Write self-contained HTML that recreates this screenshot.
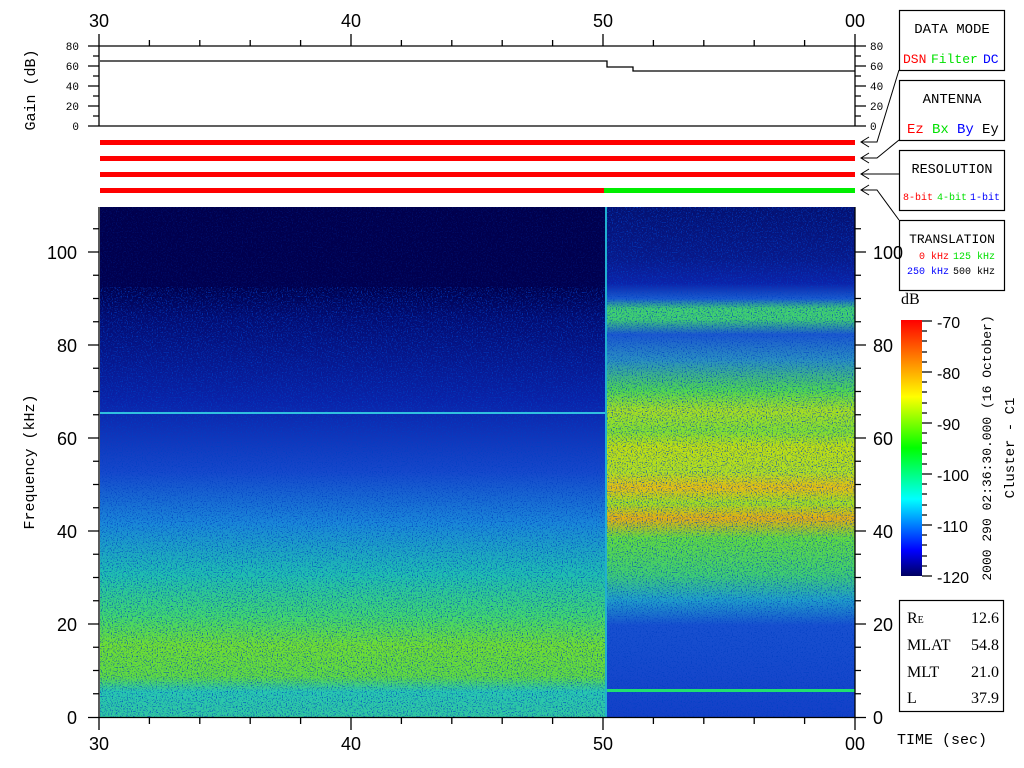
<!DOCTYPE html>
<html><head><meta charset="utf-8"><style>
html,body{margin:0;padding:0;background:#fff;width:1024px;height:768px;overflow:hidden}
svg{display:block}
.t{font-family:"Liberation Sans",sans-serif;font-size:18px;fill:#000}
.m{font-family:"Liberation Mono",monospace;font-size:11px;fill:#000}
.b{font-family:"Liberation Mono",monospace;font-size:14px;fill:#000}
.s{font-family:"Liberation Serif",serif;font-size:16px;fill:#000}
.r{fill:#ff0000 !important}.g{fill:#00e000 !important}.u{fill:#0000ff !important}
</style></head><body>
<svg width="1024" height="768" viewBox="0 0 1024 768" xmlns="http://www.w3.org/2000/svg">
<defs>
<linearGradient id="gl" x1="0" y1="207" x2="0" y2="717" gradientUnits="userSpaceOnUse">
<stop offset="0" stop-color="#000048"/>
<stop offset="0.16" stop-color="#00004e"/>
<stop offset="0.22" stop-color="#030c72"/>
<stop offset="0.38" stop-color="#0a22a8"/>
<stop offset="0.52" stop-color="#1648cc"/>
<stop offset="0.62" stop-color="#1a88d8"/>
<stop offset="0.72" stop-color="#20c0b0"/>
<stop offset="0.8" stop-color="#40d870"/>
<stop offset="0.86" stop-color="#70e030"/>
<stop offset="0.92" stop-color="#60dc40"/>
<stop offset="0.95" stop-color="#28c8b0"/>
<stop offset="1" stop-color="#30c8a0"/>
</linearGradient>
<linearGradient id="gr" x1="0" y1="207" x2="0" y2="717" gradientUnits="userSpaceOnUse">
<stop offset="0" stop-color="#041070"/>
<stop offset="0.1" stop-color="#081888"/>
<stop offset="0.15" stop-color="#0c22a8"/>
<stop offset="0.18" stop-color="#1a5cd0"/>
<stop offset="0.2" stop-color="#40d070"/>
<stop offset="0.22" stop-color="#40d070"/>
<stop offset="0.25" stop-color="#1c58d0"/>
<stop offset="0.3" stop-color="#2a90c0"/>
<stop offset="0.36" stop-color="#50d850"/>
<stop offset="0.4" stop-color="#a8e020"/>
<stop offset="0.44" stop-color="#80e030"/>
<stop offset="0.47" stop-color="#c0e010"/>
<stop offset="0.52" stop-color="#b0e020"/>
<stop offset="0.55" stop-color="#e8c010"/>
<stop offset="0.58" stop-color="#a0e020"/>
<stop offset="0.61" stop-color="#e8b010"/>
<stop offset="0.65" stop-color="#60dc40"/>
<stop offset="0.72" stop-color="#40d070"/>
<stop offset="0.77" stop-color="#20a0c8"/>
<stop offset="0.82" stop-color="#1850d0"/>
<stop offset="1" stop-color="#1440c8"/>
</linearGradient>
<linearGradient id="cb" x1="0" y1="576" x2="0" y2="320" gradientUnits="userSpaceOnUse">
<stop offset="0" stop-color="#000060"/>
<stop offset="0.1" stop-color="#0000ff"/>
<stop offset="0.3" stop-color="#00ffff"/>
<stop offset="0.5" stop-color="#00ff00"/>
<stop offset="0.7" stop-color="#ffff00"/>
<stop offset="1" stop-color="#ff0000"/>
</linearGradient>
<filter id="nz" x="0" y="0" width="100%" height="100%">
<feTurbulence type="fractalNoise" baseFrequency="0.8" numOctaves="1" seed="4"/>
<feColorMatrix type="matrix" values="0 0 0 0 0  0 0 0 0 0.05  0 0 0 0 0.55  5 0 0 0 -2.6"/>
</filter>
</defs>

<text class="t" x="99" y="27" text-anchor="middle">30</text>
<text class="t" x="351" y="27" text-anchor="middle">40</text>
<text class="t" x="603" y="27" text-anchor="middle">50</text>
<text class="t" x="855" y="27" text-anchor="middle">00</text>

<g stroke="#000" stroke-width="1.3" fill="none">
<path d="M88 46H866M88 126H866M99 34V126M855 34V126"/>
<path d="M88 66H99M88 86H99M88 106H99M93 56H99M93 76H99M93 96H99M93 116H99"/>
<path d="M855 66H866M855 86H866M855 106H866M855 56H861M855 76H861M855 96H861M855 116H861"/>
<path d="M100 61H607V67H633V71H855"/>
<path d="M149.4 40V46M199.8 40V46M250.2 40V46M300.6 40V46M351 34V46M401.4 40V46M451.8 40V46M502.2 40V46M552.6 40V46M603 34V46M653.4 40V46M703.8 40V46M754.2 40V46M804.6 40V46"/>
</g>
<g>
<text x="79" y="50" text-anchor="end" class="m">80</text>
<text x="79" y="70" text-anchor="end" class="m">60</text>
<text x="79" y="90" text-anchor="end" class="m">40</text>
<text x="79" y="110" text-anchor="end" class="m">20</text>
<text x="79" y="130" text-anchor="end" class="m">0</text>
<text x="870" y="50" class="m">80</text>
<text x="870" y="70" class="m">60</text>
<text x="870" y="90" class="m">40</text>
<text x="870" y="110" class="m">20</text>
<text x="870" y="130" class="m">0</text>
</g>
<text class="b" transform="translate(35,90) rotate(-90)" text-anchor="middle" style="font-size:15px">Gain (dB)</text>

<rect x="100" y="140" width="755" height="5" fill="#ff0000"/>
<rect x="100" y="156" width="755" height="5" fill="#ff0000"/>
<rect x="100" y="172" width="755" height="5" fill="#ff0000"/>
<rect x="100" y="188" width="504" height="5" fill="#ff0000"/>
<rect x="604" y="188" width="251" height="5" fill="#00ee00"/>

<g stroke="#000" stroke-width="1" fill="none">
<path d="M869 137L861 142L869 147M861 142H877L899 70"/>
<path d="M869 153L861 158L869 163M861 158H877L899 140"/>
<path d="M869 169L861 174L869 179M861 174H899"/>
<path d="M869 185L861 190L869 195M861 190H877L899 220"/>
</g>

<g fill="#fff" stroke="#000" stroke-width="1.2">
<rect x="899.5" y="10.5" width="105" height="60"/>
<rect x="899.5" y="80.5" width="105" height="60"/>
<rect x="899.5" y="150.5" width="105" height="60"/>
<rect x="899.5" y="220.5" width="105" height="70"/>
<rect x="899.5" y="600.5" width="104" height="111"/>
</g>
<g>
<text class="b" x="952" y="33" text-anchor="middle" style="font-size:14px">DATA MODE</text>
<text class="b r" x="903" y="63" style="font-size:13px">DSN</text>
<text class="b g" x="931" y="63" style="font-size:13px">Filter</text>
<text class="b u" x="983" y="63" style="font-size:13px">DC</text>
<text class="b" x="952" y="103" text-anchor="middle" style="font-size:14px">ANTENNA</text>
<text class="b r" x="907" y="133">Ez</text>
<text class="b g" x="932" y="133">Bx</text>
<text class="b u" x="957" y="133">By</text>
<text class="b" x="982" y="133">Ey</text>
<text class="b" x="952" y="173" text-anchor="middle" style="font-size:13.5px">RESOLUTION</text>
<text class="b" x="952" y="243" text-anchor="middle" style="font-size:13px">TRANSLATION</text>
</g>
<g>
<text class="m r" x="903" y="200" style="font-size:10px">8-bit</text>
<text class="m g" x="937" y="200" style="font-size:10px">4-bit</text>
<text class="m u" x="970" y="200" style="font-size:10px">1-bit</text>
<text class="m r" x="919" y="259" style="font-size:10px">0 kHz</text>
<text class="m g" x="953" y="259" style="font-size:10px">125 kHz</text>
<text class="m u" x="907" y="274" style="font-size:10px">250 kHz</text>
<text class="m" x="953" y="274" style="font-size:10px">500 kHz</text>
</g>

<rect x="100" y="207" width="506" height="510" fill="url(#gl)"/>
<rect x="606" y="207" width="249" height="510" fill="url(#gr)"/>
<rect x="100" y="207" width="755" height="510" filter="url(#nz)" opacity="0.8"/>
<rect x="100" y="207" width="506" height="80" fill="#000050" opacity="0.7"/>
<rect x="100" y="412" width="506" height="2" fill="#30c0e0"/>
<rect x="605" y="207" width="2" height="510" fill="#20b0d0"/>
<rect x="607" y="689" width="248" height="3" fill="#20e070"/>

<g stroke="#000" stroke-width="1.3" fill="none">
<path d="M99 207V730M855 207V730M88 717.5H866"/>
<path d="M149.4 718V724M199.8 718V724M250.2 718V724M300.6 718V724M351 718V730M401.4 718V724M451.8 718V724M502.2 718V724M552.6 718V724M603 718V730M653.4 718V724M703.8 718V724M754.2 718V724M804.6 718V724"/>
<path d="M93 693.75H99M93 670.5H99M93 647.25H99M88 624H99M93 600.75H99M93 577.5H99M93 554.25H99M88 531H99M93 507.75H99M93 484.5H99M93 461.25H99M88 438H99M93 414.75H99M93 391.5H99M93 368.25H99M88 345H99M93 321.75H99M93 298.5H99M93 275.25H99M88 252H99M93 228.75H99"/>
<path d="M855 693.75H861M855 670.5H861M855 647.25H861M855 624H866M855 600.75H861M855 577.5H861M855 554.25H861M855 531H866M855 507.75H861M855 484.5H861M855 461.25H861M855 438H866M855 414.75H861M855 391.5H861M855 368.25H861M855 345H866M855 321.75H861M855 298.5H861M855 275.25H861M855 252H866M855 228.75H861"/>
</g>
<g class="t">
<text x="77" y="724" text-anchor="end">0</text>
<text x="77" y="631" text-anchor="end">20</text>
<text x="77" y="538" text-anchor="end">40</text>
<text x="77" y="445" text-anchor="end">60</text>
<text x="77" y="352" text-anchor="end">80</text>
<text x="77" y="259" text-anchor="end">100</text>
<text x="873" y="724">0</text>
<text x="873" y="631">20</text>
<text x="873" y="538">40</text>
<text x="873" y="445">60</text>
<text x="873" y="352">80</text>
<text x="873" y="259">100</text>
<text x="99" y="750" text-anchor="middle">30</text>
<text x="351" y="750" text-anchor="middle">40</text>
<text x="603" y="750" text-anchor="middle">50</text>
<text x="855" y="750" text-anchor="middle">00</text>
</g>
<text class="b" transform="translate(34,462) rotate(-90)" text-anchor="middle" style="font-size:15px">Frequency (kHz)</text>
<text class="b" x="897" y="744" style="font-size:15px">TIME (sec)</text>

<text class="s" x="901" y="304">dB</text>
<rect x="901" y="320" width="21" height="256" fill="url(#cb)"/>
<g stroke="#000" stroke-width="1.2" fill="none">
<path d="M922 321H932M922 372H932M922 423H932M922 474H932M922 525H932M922 576H932"/>
<path d="M922 331H927M922 341H927M922 352H927M922 362H927M922 382H927M922 392H927M922 403H927M922 413H927M922 433H927M922 443H927M922 454H927M922 464H927M922 484H927M922 494H927M922 505H927M922 515H927M922 535H927M922 545H927M922 556H927M922 566H927"/>
</g>
<g class="t" style="font-size:16px">
<text x="937" y="328">-70</text>
<text x="937" y="379">-80</text>
<text x="937" y="430">-90</text>
<text x="937" y="481">-100</text>
<text x="937" y="532">-110</text>
<text x="937" y="583">-120</text>
</g>
<text class="b" transform="translate(991,448) rotate(-90)" text-anchor="middle" style="font-size:13px">2000 290 02:36:30.000 (16 October)</text>
<text class="b" transform="translate(1014,448) rotate(-90)" text-anchor="middle" style="font-size:14px">Cluster - C1</text>

<g class="s" style="font-size:16px">
<text x="907" y="623">R<tspan style="font-size:10px">E</tspan></text><text x="999" y="623" text-anchor="end">12.6</text>
<text x="907" y="650">MLAT</text><text x="999" y="650" text-anchor="end">54.8</text>
<text x="907" y="677">MLT</text><text x="999" y="677" text-anchor="end">21.0</text>
<text x="907" y="703">L</text><text x="999" y="703" text-anchor="end">37.9</text>
</g>
</svg>
</body></html>
